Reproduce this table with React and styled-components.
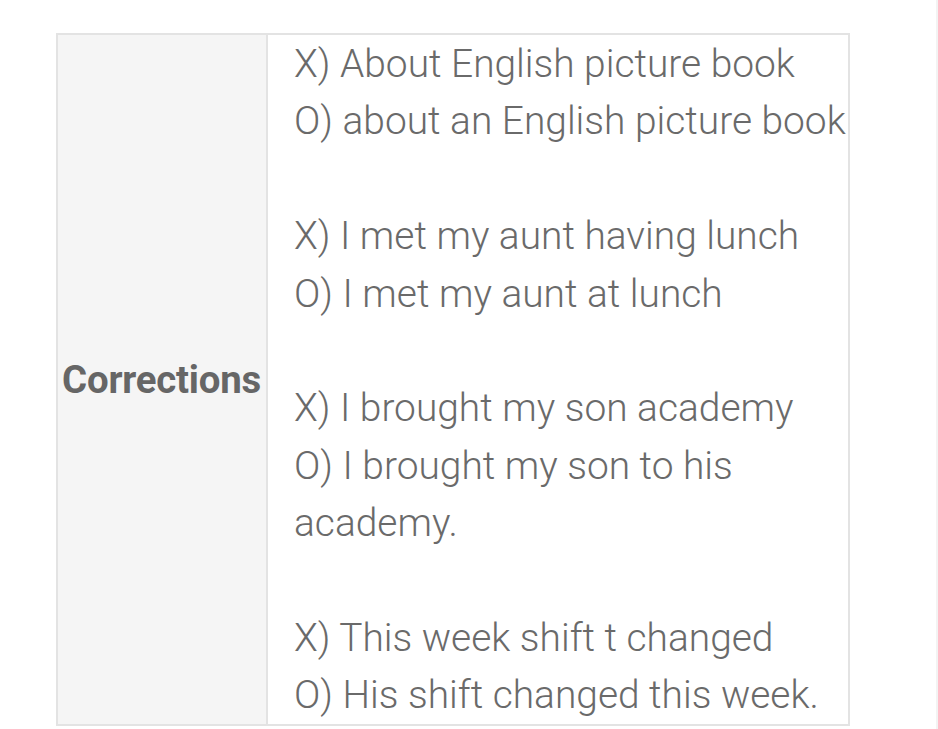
import React from 'react';
import styled, { createGlobalStyle } from 'styled-components';

const GlobalStyle = createGlobalStyle`
  body {
    margin: 0;
    background: #fff;
    font-family: Roboto, "Liberation Sans", sans-serif;
  }
`

const Page = styled.main`
  box-sizing: border-box;
  width: 938px;
  height: 729px;
  padding: 33px 0 0 56px;
  border-right: 2px solid #f3f3f3;
  overflow: hidden;
`

const Table = styled.table`
  border-collapse: collapse;
  width: 794px;

  th, td {
    border: 2px solid #e3e3e3;
  }
`

const Head = styled.th`
  width: 202px;
  padding: 0 2px 0 4px;
  background: #f5f5f5;
  color: #666;
  font-size: 38.4px;
  font-weight: 700;
  text-align: left;
  vertical-align: middle;
  letter-spacing: -0.2px;
  white-space: nowrap;
`

const Body = styled.td`
  padding: 0 0 0 26px;
  color: #6a6a6a;
  font-size: 38.9px;
  font-weight: 300;
  line-height: 57.4px;
  white-space: nowrap;
`

const Pair = styled.p`
  margin: 0;

  & + & {
    margin-top: 57.4px;
  }
`

const corrections = [
  ['X) About English picture book', 'O) about an English picture book'],
  ['X) I met my aunt having lunch', 'O) I met my aunt at lunch'],
  ['X) I brought my son academy', 'O) I brought my son to his', 'academy.'],
  ['X) This week shift t changed', 'O) His shift changed this week.'],
]

const App = () => (
  <Page>
    <GlobalStyle />
    <Table>
      <tbody>
        <tr>
          <Head>Corrections</Head>
          <Body>
            {corrections.map((lines, i) => (
              <Pair key={i}>
                {lines.map((line, j) => (
                  <React.Fragment key={j}>
                    {j > 0 && <br />}
                    {line}
                  </React.Fragment>
                ))}
              </Pair>
            ))}
          </Body>
        </tr>
      </tbody>
    </Table>
  </Page>
)

export default App;
